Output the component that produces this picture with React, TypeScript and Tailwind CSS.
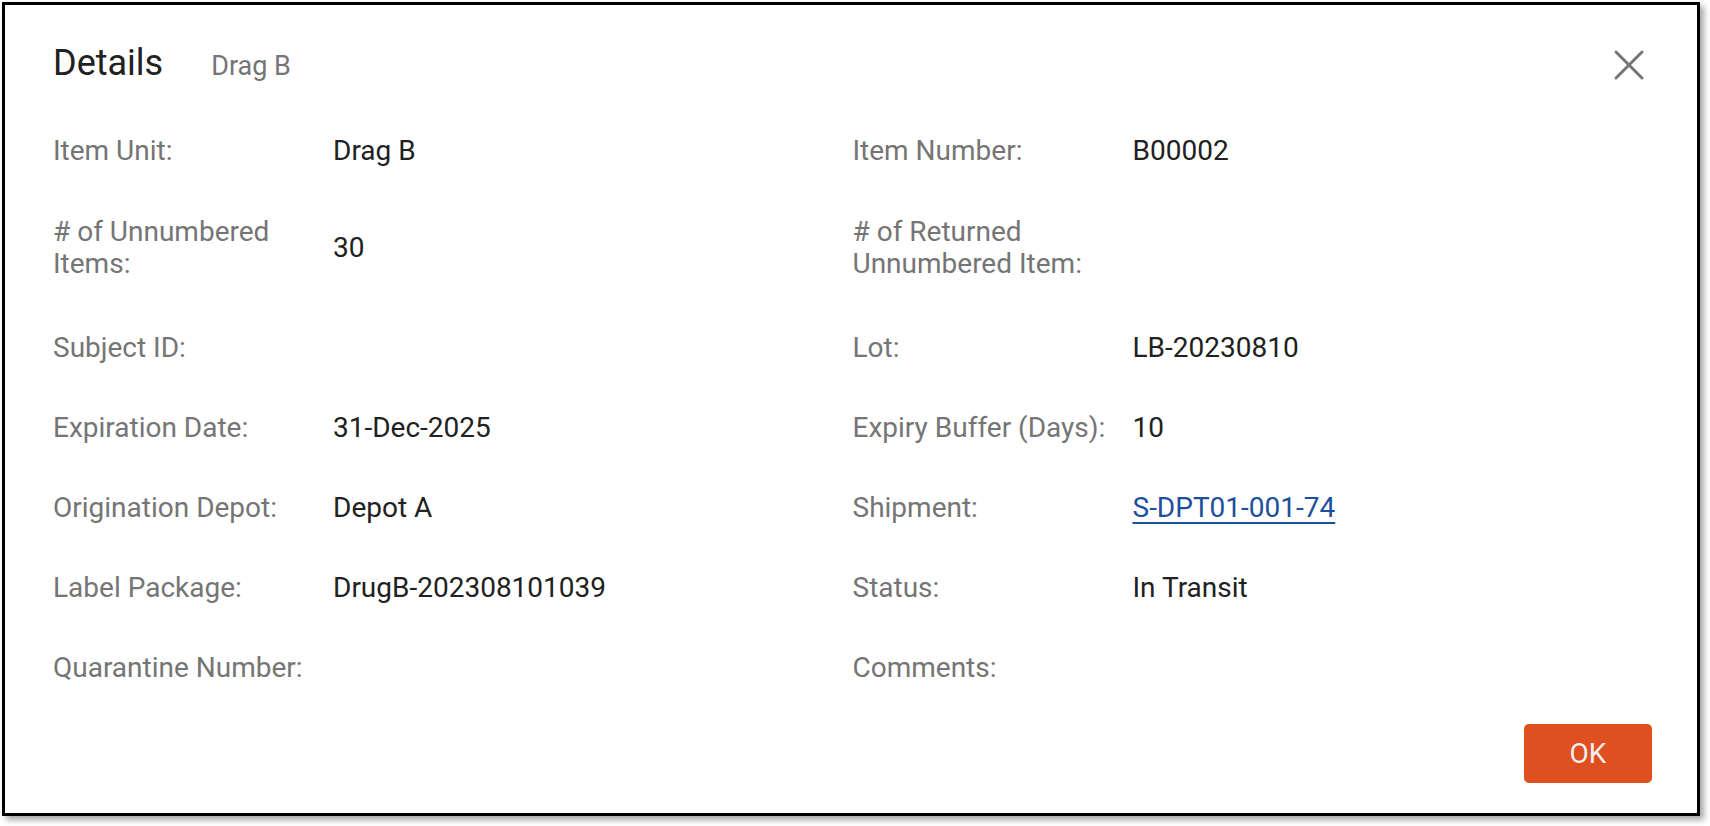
import React from "react";

type Row = { label: string; value?: string; link?: boolean };

const rows: Row[] = [
  { label: "Item Unit:", value: "Drag B" },
  { label: "Item Number:", value: "B00002" },
  { label: "# of Unnumbered Items:", value: "30" },
  { label: "# of Returned Unnumbered Item:", value: "" },
  { label: "Subject ID:", value: "" },
  { label: "Lot:", value: "LB-20230810" },
  { label: "Expiration Date:", value: "31-Dec-2025" },
  { label: "Expiry Buffer (Days):", value: "10" },
  { label: "Origination Depot:", value: "Depot A" },
  { label: "Shipment:", value: "S-DPT01-001-74", link: true },
  { label: "Label Package:", value: "DrugB-202308101039" },
  { label: "Status:", value: "In Transit" },
  { label: "Quarantine Number:", value: "" },
  { label: "Comments:", value: "" },
];

export default function App() {
  return (
    <div
      className="w-[1710px] h-[826px] bg-white overflow-hidden"
      style={{ fontFamily: "Roboto, 'Liberation Sans', Arial, sans-serif" }}
    >
      <div className="ml-[2px] mt-[2px] w-[1698px] h-[814px] border-[3px] border-black bg-white shadow-[4px_4px_6px_rgba(0,0,0,0.35)] pl-[48px] pr-[45px] pt-[35px] flex flex-col">
        <div className="h-[48px] flex items-center justify-between">
          <div className="flex items-baseline">
            <span className="text-[36px] leading-[48px] text-[#212121]">Details</span>
            <span className="ml-[48px] text-[27px] leading-[48px] text-[#757575]">Drag B</span>
          </div>
          <svg width="40" height="40" viewBox="0 0 40 40" className="mt-[2px] mr-[3px]">
            <path d="M7 7 L33 33 M33 7 L7 33" stroke="#757575" strokeWidth="3" strokeLinecap="round" />
          </svg>
        </div>
        <div className="mt-[23px] grid grid-cols-2">
          {rows.map((r, i) => (
            <div
              key={i}
              className={
                i === 2 || i === 3
                  ? "flex items-center pt-[25px] pb-[28px] text-[28px] leading-[32px]"
                  : "flex items-center py-6 text-[28px] leading-[32px]"
              }
            >
              <div className="w-[280px] shrink-0 pr-4 text-[#757575]">{r.label}</div>
              <div className="text-[#212121]">
                {r.link ? (
                  <span className="text-[#1c4f9c] underline underline-offset-[5px] decoration-[2px]">{r.value}</span>
                ) : (
                  r.value
                )}
              </div>
            </div>
          ))}
        </div>
        <div className="mt-[16px] flex justify-end">
          <button className="w-[128px] h-[59px] rounded-[5px] bg-[#e04f1f] text-[#f0f0f0] text-[28px] leading-[32px]">
            OK
          </button>
        </div>
      </div>
    </div>
  );
}
